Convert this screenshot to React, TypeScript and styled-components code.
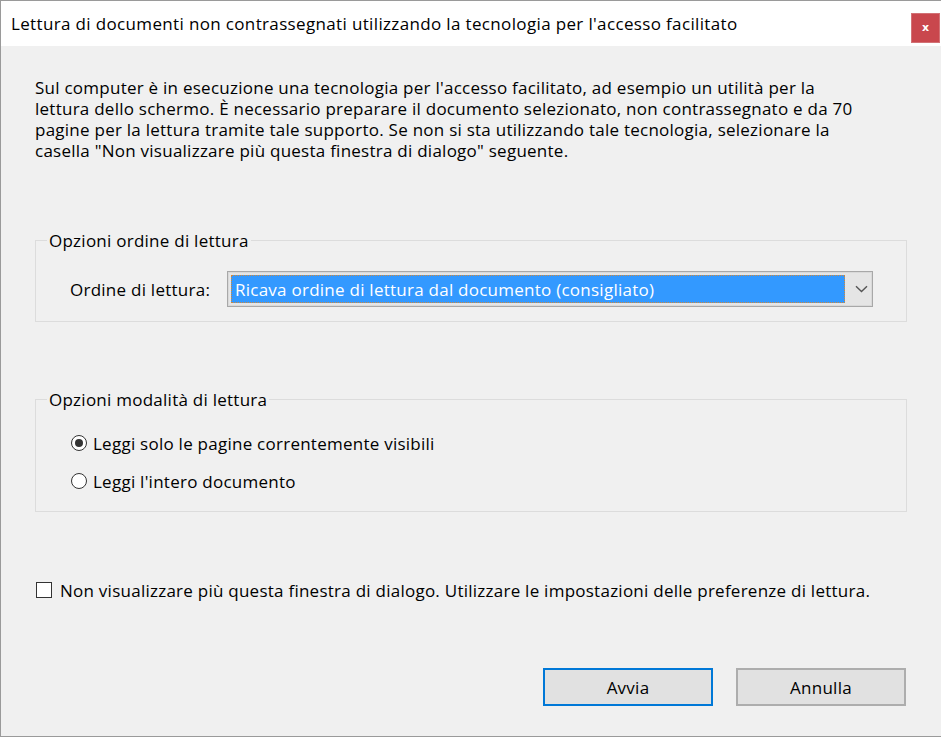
import React from "react";
import styled, { createGlobalStyle } from "styled-components";

const GlobalStyle = createGlobalStyle`
  html, body {
    margin: 0;
    padding: 0;
    background: #f0f0f0;
  }
  body {
    font-family: "Open Sans", "Noto Sans", "Liberation Sans", sans-serif;
    font-size: 17px;
    letter-spacing: 0.25px;
    color: #000;
  }
`;

const Window = styled.div`
  width: 941px;
  height: 737px;
  box-sizing: border-box;
  border: 1px solid #9a9a9a;
  border-right: none;
  display: flex;
  flex-direction: column;
  background: #f0f0f0;
`;

const TitleBar = styled.div`
  height: 45px;
  background: #fff;
  display: flex;
  align-items: center;
  justify-content: space-between;
  padding-left: 10px;
  flex-shrink: 0;
`;

const Title = styled.div`
  letter-spacing: 0.35px;
  line-height: 21px;
  margin-top: 0;
  white-space: nowrap;
`;

const CloseButton = styled.button`
  width: 29px;
  height: 30px;
  margin-top: 9px;
  margin-right: 1px;
  border: 1px solid #d27175;
  background: #c9474d;
  color: #fff;
  font-family: "DejaVu Sans", sans-serif;
  font-weight: bold;
  font-size: 11px;
  line-height: 1;
  padding: 0 0 2px;
  display: flex;
  align-items: center;
  justify-content: center;
`;

const Body = styled.div`
  flex: 1;
  padding: 0 34px 0 34px;
  display: flex;
  flex-direction: column;
`;

const Intro = styled.p`
  margin: 31px 0 0;
  line-height: 21px;
  white-space: nowrap;
`;

const Group = styled.fieldset<{ $top: number }>`
  margin: ${(p) => p.$top}px 0 0;
  padding: 0;
  border: 1px solid #dcdcdc;
  min-width: 0;
`;

const Legend = styled.legend`
  margin-left: 11px;
  padding: 0 2px;
  line-height: 21px;
`;

const SelectRow = styled.div`
  display: flex;
  align-items: center;
  padding: 20px 33px 14px 34px;
`;

const FieldLabel = styled.span`
  width: 157px;
  line-height: 21px;
  white-space: nowrap;
`;

const Select = styled.div`
  flex: 1;
  height: 36px;
  box-sizing: border-box;
  border: 1px solid #a8a8a8;
  box-shadow: inset 0 0 0 1px #d9d9d9;
  background: #e5e5e5;
  display: flex;
  align-items: center;
  padding: 3px 4px 3px 3px;
`;

const Selected = styled.div`
  flex: 1;
  height: 28px;
  box-sizing: border-box;
  background: #3399ff;
  border: 1px dotted #d0883a;
  color: #fff;
  display: flex;
  align-items: center;
  padding-left: 3px;
  margin-right: 10px;
  white-space: nowrap;
`;

const Chevron = styled.svg`
  flex-shrink: 0;
`;

const RadioList = styled.div`
  display: flex;
  flex-direction: column;
  gap: 14px;
  padding: 21px 0 18px 35px;
`;

const OptionRow = styled.label`
  display: flex;
  align-items: center;
  height: 24px;
  gap: 6px;
  white-space: nowrap;
`;

const RadioDot = styled.span<{ $checked?: boolean }>`
  width: 16px;
  height: 16px;
  box-sizing: border-box;
  border-radius: 50%;
  border: 1px solid #333;
  background: #fff;
  display: flex;
  align-items: center;
  justify-content: center;
  flex-shrink: 0;
  &::after {
    content: "";
    width: 8px;
    height: 8px;
    border-radius: 50%;
    background: ${(p) => (p.$checked ? "#333" : "transparent")};
  }
`;

const CheckRow = styled(OptionRow)`
  margin-top: 66px;
  margin-left: 1px;
  gap: 8px;
`;

const CheckBox = styled.span`
  width: 16px;
  height: 16px;
  box-sizing: border-box;
  border: 1px solid #333;
  background: #fff;
  flex-shrink: 0;
`;

const Footer = styled.div`
  display: flex;
  justify-content: flex-end;
  gap: 23px;
  margin-top: 66px;
  padding-right: 1px;
`;

const Button = styled.button<{ $default?: boolean }>`
  width: 170px;
  height: 38px;
  box-sizing: border-box;
  background: #e1e1e1;
  border: ${(p) => (p.$default ? "2px solid #0078d7" : "2px solid #adadad")};
  font-family: inherit;
  font-size: 17px;
  letter-spacing: 0.25px;
  color: #000;
  padding: 0;
`;

export default function App() {
  return (
    <>
      <GlobalStyle />
      <Window>
        <TitleBar>
          <Title>
            Lettura di documenti non contrassegnati utilizzando la tecnologia
            per l'accesso facilitato
          </Title>
          <CloseButton aria-label="Chiudi">x</CloseButton>
        </TitleBar>
        <Body>
          <Intro>
            Sul computer è in esecuzione una tecnologia per l'accesso
            facilitato, ad esempio un utilità per la
            <br />
            lettura dello schermo. È necessario preparare il documento
            selezionato, non contrassegnato e da 70
            <br />
            pagine per la lettura tramite tale supporto. Se non si sta
            utilizzando tale tecnologia, selezionare la
            <br />
            casella "Non visualizzare più questa finestra di dialogo" seguente.
          </Intro>

          <Group $top={69}>
            <Legend>Opzioni ordine di lettura</Legend>
            <SelectRow>
              <FieldLabel>Ordine di lettura:</FieldLabel>
              <Select>
                <Selected>
                  Ricava ordine di lettura dal documento (consigliato)
                </Selected>
                <Chevron width="13" height="8" viewBox="0 0 13 8">
                  <path
                    d="M1 1.2 L6.5 6.5 L12 1.2"
                    fill="none"
                    stroke="#555"
                    strokeWidth="1.4"
                  />
                </Chevron>
              </Select>
            </SelectRow>
          </Group>

          <Group $top={67}>
            <Legend>Opzioni modalità di lettura</Legend>
            <RadioList>
              <OptionRow>
                <RadioDot $checked />
                Leggi solo le pagine correntemente visibili
              </OptionRow>
              <OptionRow>
                <RadioDot />
                Leggi l'intero documento
              </OptionRow>
            </RadioList>
          </Group>

          <CheckRow>
            <CheckBox />
            Non visualizzare più questa finestra di dialogo. Utilizzare le
            impostazioni delle preferenze di lettura.
          </CheckRow>

          <Footer>
            <Button $default>Avvia</Button>
            <Button>Annulla</Button>
          </Footer>
        </Body>
      </Window>
    </>
  );
}
